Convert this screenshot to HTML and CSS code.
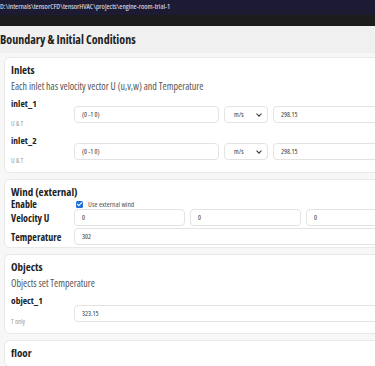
FILE: index.html
```html
<!DOCTYPE html>
<html lang="en">
<head>
  <meta charset="UTF-8" />
  <meta name="viewport" content="width=device-width, initial-scale=1" />
  <title>Boundary &amp; Initial Conditions</title>
  <link rel="stylesheet" href="styles.css">
</head>
<body>
  <div class="titlebar">D:\internals\tensorCFD\tensorHVAC\projects\engine-room-trial-1</div>
  <div class="menubar"></div>

  <div class="page-head">
    <h1>Boundary &amp; Initial Conditions</h1>
  </div>

  <div class="content">
    <!-- Inlets -->
    <section class="card">
      <div class="card-head">
        <h2>Inlets</h2>
        <span class="badge round">2</span>
      </div>
      <p class="desc">Each inlet has velocity vector U (u,v,w) and Temperature</p>

      <div class="item">
        <div class="item-name">inlet_1</div>
        <div class="item-fields inlet-fields">
          <input type="text" value="(0 -1 0)">
          <div class="select">m/s <span class="chev"></span></div>
          <input type="text" value="298.15">
        </div>
        <div class="item-note">U &amp; T</div>
      </div>

      <div class="item">
        <div class="item-name">inlet_2</div>
        <div class="item-fields inlet-fields">
          <input type="text" value="(0 -1 0)">
          <div class="select">m/s <span class="chev"></span></div>
          <input type="text" value="298.15">
        </div>
        <div class="item-note">U &amp; T</div>
      </div>
    </section>

    <!-- Wind -->
    <section class="card wind-card">
      <div class="card-head">
        <h2>Wind (external)</h2>
      </div>
      <div class="form-row enable-row">
        <label class="row-label">Enable</label>
        <label class="check"><span class="box"></span>Use external wind</label>
      </div>
      <div class="form-row">
        <label class="row-label">Velocity U</label>
        <div class="three">
          <input type="text" value="0">
          <input type="text" value="0">
          <input type="text" value="0">
        </div>
      </div>
      <div class="form-row">
        <label class="row-label">Temperature</label>
        <input type="text" value="302">
      </div>
    </section>

    <!-- Objects -->
    <section class="card">
      <div class="card-head">
        <h2>Objects</h2>
        <span class="badge">1 objects</span>
      </div>
      <p class="desc">Objects set Temperature</p>
      <div class="item obj-item">
        <div class="item-name">object_1</div>
        <div class="item-fields">
          <input type="text" value="323.15">
        </div>
        <div class="item-note">T only</div>
      </div>
    </section>

    <!-- floor -->
    <section class="card">
      <div class="card-head">
        <h2>floor</h2>
      </div>
    </section>
  </div>
</body>
</html>
```

FILE: styles.css
```css
html, body {
  margin: 0;
  padding: 0;
  overflow: hidden;
}

body {
  width: 430px;
  font-family: 'Open Sans', 'Noto Sans', sans-serif;
  font-stretch: 75%;
  background: #f7f7f7;
  color: #222;
}

.titlebar {
  height: 15px;
  line-height: 13px;
  background: #1d1b33;
  color: #e6e6ee;
  font-size: 7.5px;
  white-space: nowrap;
}

.menubar {
  height: 11px;
  background: #1c1c1c;
}

.page-head {
  height: 27px;
  background: #f0f0f0;
  display: flex;
  align-items: center;
}

h1 {
  margin: 0;
  font-size: 12px;
  font-weight: 700;
  color: #222;
}

.content {
  padding: 4px 0 0 4px;
  display: flex;
  flex-direction: column;
  gap: 6px;
}

.card {
  background: #fff;
  border: 1px solid #e9e9e9;
  border-radius: 6px;
  padding: 4px 6px 5px 6px;
}

.wind-card {
  padding-bottom: 2px;
}

.card-head {
  display: flex;
  align-items: center;
  justify-content: space-between;
  height: 16px;
  padding-right: 48px;
}

h2 {
  margin: 0;
  font-size: 11px;
  line-height: 12px;
  font-weight: 700;
  color: #1e1e1e;
}

.badge {
  font-size: 7px;
  color: #444;
  background: #f3f3f3;
  border: 1px solid #e4e4e4;
  border-radius: 8px;
  padding: 1px 5px;
  margin-right: -45px;
}

.badge.round {
  width: 14px;
  height: 14px;
  box-sizing: border-box;
  padding: 0;
  border-radius: 50%;
  display: flex;
  align-items: center;
  justify-content: center;
  margin-right: -39px;
}

.desc {
  margin: 2px 0 5px;
  font-size: 10px;
  line-height: 13px;
  color: #555;
}

.item {
  display: grid;
  grid-template-columns: 63px 1fr;
  grid-template-rows: 8px 17px 5px;
  margin-bottom: 7px;
}

.item:last-child {
  margin-bottom: 2px;
}

.item-name {
  grid-column: 1;
  grid-row: 1 / 3;
  align-self: start;
  font-size: 9.5px;
  font-weight: 700;
  line-height: 12px;
}

.item-fields {
  grid-column: 2;
  grid-row: 2;
  display: flex;
  gap: 5px;
}

.obj-item {
  grid-template-rows: 10px 17px 4px;
}

.item-fields input {
  flex: 1;
}

.inlet-fields input:first-child {
  flex: 0 0 145px;
}

.inlet-fields input:last-child {
  flex: 0 0 140px;
}

.item-note {
  grid-column: 1;
  grid-row: 2 / 4;
  align-self: end;
  font-size: 7px;
  line-height: 9px;
  color: #9a9a9a;
}

input {
  height: 17px;
  box-sizing: border-box;
  border: 1px solid #e3e3e3;
  border-radius: 4px;
  padding: 0 7px;
  font-family: inherit;
  font-stretch: 75%;
  font-size: 7px;
  color: #333;
  background: #fff;
  min-width: 0;
}

.select {
  flex: 0 0 44px;
  box-sizing: border-box;
  height: 17px;
  border: 1px solid #e3e3e3;
  border-radius: 4px;
  font-size: 7px;
  color: #333;
  padding: 0 6px 0 9px;
  display: flex;
  align-items: center;
  justify-content: space-between;
}

.chev {
  width: 3px;
  height: 3px;
  border-right: 1.3px solid #333;
  border-bottom: 1.3px solid #333;
  transform: rotate(45deg);
  margin-top: -2px;
}

.form-row {
  display: grid;
  grid-template-columns: 63px 1fr;
  align-items: center;
  margin-bottom: 2px;
}

.form-row:last-child {
  margin-bottom: 0;
}

.row-label {
  font-size: 10px;
  line-height: 12px;
  font-weight: 700;
}

.enable-row {
  height: 10px;
  margin-top: -1px;
  margin-bottom: 0;
}

.enable-row .row-label {
  line-height: 10px;
}

.check {
  display: flex;
  align-items: center;
  gap: 5px;
  font-size: 7.5px;
  line-height: 10px;
  color: #555;
  padding-left: 2px;
}

.box {
  width: 7px;
  height: 7px;
  border-radius: 1.5px;
  background: #1f6fd6;
  position: relative;
}

.box::after {
  content: "";
  position: absolute;
  left: 2.2px;
  top: 0.6px;
  width: 2px;
  height: 4px;
  border-right: 1.2px solid #fff;
  border-bottom: 1.2px solid #fff;
  transform: rotate(45deg);
}

.three {
  display: flex;
  gap: 5px;
}

.three input {
  flex: 0 0 111px;
}
```
